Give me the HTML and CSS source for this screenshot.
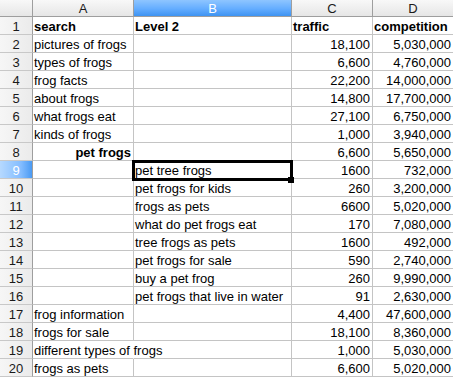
FILE: index.html
```html
<!DOCTYPE html>
<html>
<head>
<meta charset="utf-8">
<link rel="stylesheet" href="styles.css">
</head>
<body>
<div class="sheet">
  <div class="grid">
    <div class="corner"></div>
    <div class="ch">A</div>
    <div class="ch sel">B</div>
    <div class="ch">C</div>
    <div class="ch">D</div>

    <div class="rh">1</div><div class="c b">search</div><div class="c b">Level 2</div><div class="c b">traffic</div><div class="c b">competition</div>
    <div class="rh">2</div><div class="c">pictures of frogs</div><div class="c"></div><div class="c n">18,100</div><div class="c n">5,030,000</div>
    <div class="rh">3</div><div class="c">types of frogs</div><div class="c"></div><div class="c n">6,600</div><div class="c n">4,760,000</div>
    <div class="rh">4</div><div class="c">frog facts</div><div class="c"></div><div class="c n">22,200</div><div class="c n">14,000,000</div>
    <div class="rh">5</div><div class="c">about frogs</div><div class="c"></div><div class="c n">14,800</div><div class="c n">17,700,000</div>
    <div class="rh">6</div><div class="c">what frogs eat</div><div class="c"></div><div class="c n">27,100</div><div class="c n">6,750,000</div>
    <div class="rh">7</div><div class="c">kinds of frogs</div><div class="c"></div><div class="c n">1,000</div><div class="c n">3,940,000</div>
    <div class="rh">8</div><div class="c b n">pet frogs</div><div class="c"></div><div class="c n">6,600</div><div class="c n">5,650,000</div>
    <div class="rh sel">9</div><div class="c"></div><div class="c">pet tree frogs</div><div class="c n">1600</div><div class="c n">732,000</div>
    <div class="rh">10</div><div class="c"></div><div class="c">pet frogs for kids</div><div class="c n">260</div><div class="c n">3,200,000</div>
    <div class="rh">11</div><div class="c"></div><div class="c">frogs as pets</div><div class="c n">6600</div><div class="c n">5,020,000</div>
    <div class="rh">12</div><div class="c"></div><div class="c">what do pet frogs eat</div><div class="c n">170</div><div class="c n">7,080,000</div>
    <div class="rh">13</div><div class="c"></div><div class="c">tree frogs as pets</div><div class="c n">1600</div><div class="c n">492,000</div>
    <div class="rh">14</div><div class="c"></div><div class="c">pet frogs for sale</div><div class="c n">590</div><div class="c n">2,740,000</div>
    <div class="rh">15</div><div class="c"></div><div class="c">buy a pet frog</div><div class="c n">260</div><div class="c n">9,990,000</div>
    <div class="rh">16</div><div class="c"></div><div class="c">pet frogs that live in water</div><div class="c n">91</div><div class="c n">2,630,000</div>
    <div class="rh">17</div><div class="c">frog information</div><div class="c"></div><div class="c n">4,400</div><div class="c n">47,600,000</div>
    <div class="rh">18</div><div class="c">frogs for sale</div><div class="c"></div><div class="c n">18,100</div><div class="c n">8,360,000</div>
    <div class="rh">19</div><div class="c spill">different types of frogs</div><div class="c"></div><div class="c n">1,000</div><div class="c n">5,030,000</div>
    <div class="rh">20</div><div class="c">frogs as pets</div><div class="c"></div><div class="c n">6,600</div><div class="c n">5,020,000</div>
  </div>
  <div class="selection"><div class="handle"></div></div>
</div>
</body>
</html>
```

FILE: styles.css
```css
html, body {
  margin: 0;
  padding: 0;
  background: #ffffff;
  overflow: hidden;
}

.sheet {
  position: relative;
  width: 454px;
  height: 377px;
  overflow: hidden;
  font-family: "Liberation Sans", Arial, sans-serif;
  font-size: 13px;
  color: #000;
}

.grid {
  display: grid;
  grid-template-columns: 33px 101px 158px 81px 81px;
  grid-template-rows: 17px;
  grid-auto-rows: 18px;
}

.grid > div {
  box-sizing: border-box;
  border-right: 1px solid #c4c4c4;
  border-bottom: 1px solid #c4c4c4;
  display: flex;
  align-items: flex-end;
  line-height: 15px;
  white-space: nowrap;
  min-width: 0;
}

.corner,
.ch {
  background: linear-gradient(#f8f8f8, #e6e6e6);
  border-right-color: #9e9e9e !important;
  border-bottom-color: #9e9e9e !important;
}

.ch {
  justify-content: center;
  color: #1a1a1a;
}

.ch.sel {
  background: linear-gradient(#8ec5ff 0%, #64adff 55%, #3d93f2 100%);
  color: #ffffff;
}

.rh {
  background: linear-gradient(to right, #f6f6f6, #ebebeb);
  border-right-color: #9e9e9e !important;
  border-bottom-color: #c8c8c8 !important;
  justify-content: center;
  color: #1a1a1a;
}

.rh.sel {
  background: linear-gradient(to right, #b6d9ff, #84bdff 65%, #4a9af3);
  color: #ffffff;
}

.c {
  padding: 0 2px 0 1px;
  overflow: visible;
}

.b {
  font-weight: bold;
}

.n {
  justify-content: flex-end;
}

.spill {
  border-right-color: transparent !important;
  position: relative;
  z-index: 1;
}

.selection {
  position: absolute;
  left: 132px;
  top: 160px;
  width: 161px;
  height: 21px;
  box-sizing: border-box;
  border: 3px solid #000;
}

.handle {
  position: absolute;
  right: -4px;
  bottom: -5px;
  width: 6px;
  height: 6px;
  background: #000;
}
```
